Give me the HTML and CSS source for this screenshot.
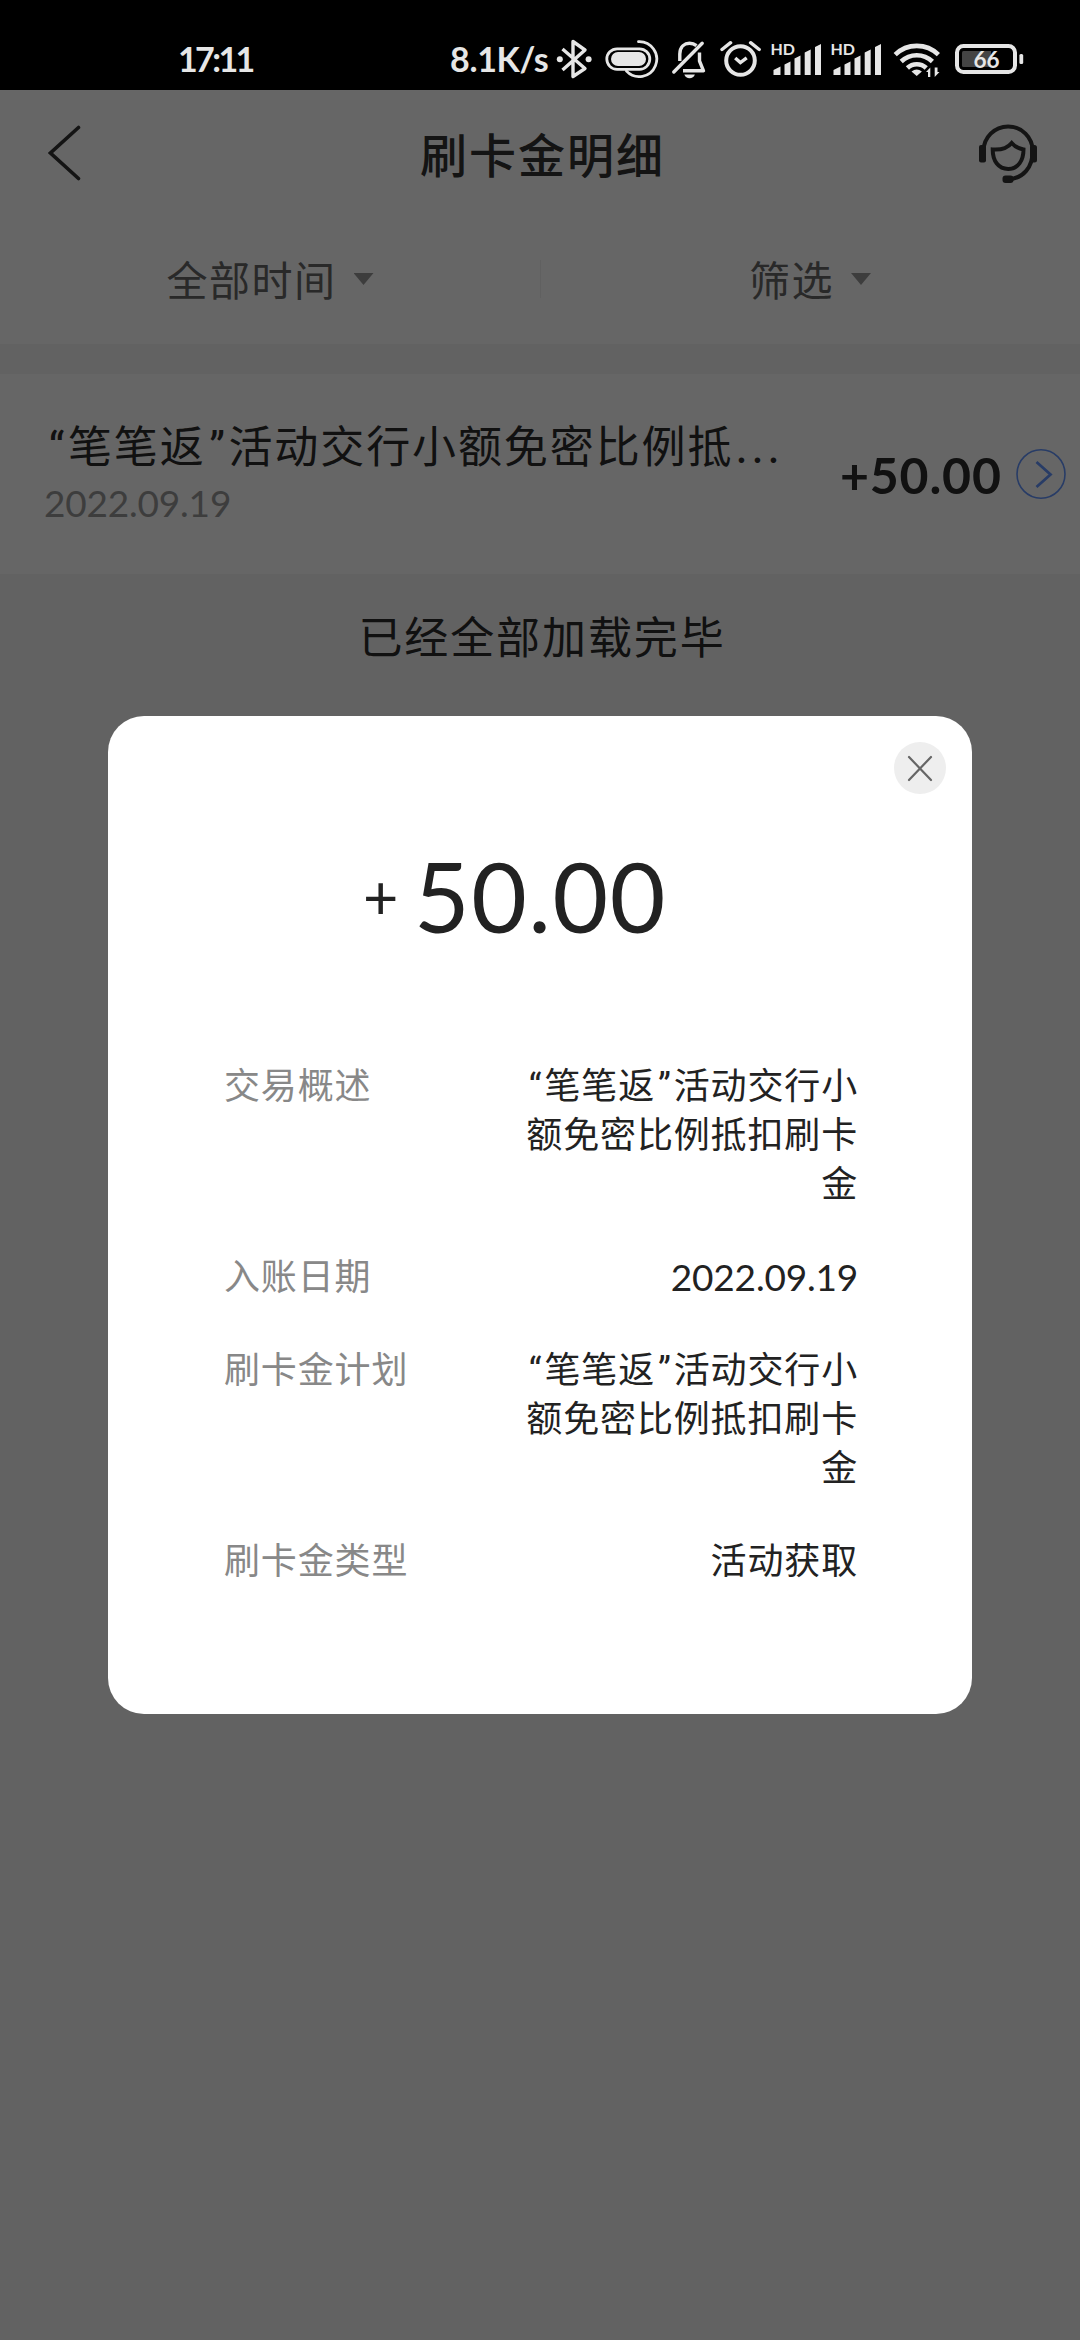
FILE: index.html
```html
<!DOCTYPE html>
<html lang="zh-CN">
<head>
<meta charset="utf-8">
<title>刷卡金明细</title>
<link rel="stylesheet" href="styles.css">
</head>
<body>
<div class="screen">
  <header class="status">
    <span class="clock">17:11</span>
    <span class="speed">8.1K/s</span>
    <svg class="ic-bt" width="36" height="42" viewBox="556 38 36 42"><path d="M562.5 49 585 68.5 573 76.5V41.5L585 50 562.5 70" fill="none" stroke="#e6e6e6" stroke-width="3.4" stroke-linejoin="round"/><circle cx="559.8" cy="59.3" r="3" fill="#e6e6e6"/><circle cx="588.6" cy="59.3" r="3" fill="#e6e6e6"/></svg>
    <svg class="ic-pill" width="56" height="42" viewBox="604 38 56 42"><rect x="606.8" y="48.8" width="43" height="20.6" rx="10.3" fill="none" stroke="#e6e6e6" stroke-width="2.8"/><rect x="611" y="52" width="35" height="14" rx="7" fill="#e6e6e6"/><path d="M638.5 41.6a17.5 17.5 0 1 1-12 29.5" fill="none" stroke="#e6e6e6" stroke-width="2.8" stroke-linecap="round"/></svg>
    <svg class="ic-bell" width="36" height="42" viewBox="671 38 36 42"><g fill="none" stroke="#e6e6e6"><path d="M679.8 61V54C680 46 685 43.3 689.5 43.3c3 0 5 .8 7 2.4M699.5 52.5v8.5l4 9.8H683" stroke-width="3.4" stroke-linejoin="round"/><path d="M673.8 72 702.2 43.2" stroke-width="3.4" stroke-linecap="round"/></g><path d="M684.3 74.5h10.6q-1.5 3.8-5.3 3.8t-5.3-3.8z" fill="#e6e6e6"/></svg>
    <svg class="ic-alarm" width="42" height="42" viewBox="720 38 42 42"><g fill="none" stroke="#e6e6e6"><circle cx="740.5" cy="60.5" r="14.3" stroke-width="4"/><path d="m735.2 58 5.2 4.6 6.3-4.8" stroke-width="3.4"/><path d="m722 49.5 8.6-6.8M759.2 49.5l-8.6-6.8" stroke-width="3.4" stroke-linecap="round"/></g></svg>
    <svg class="ic-sig1" width="54" height="42" viewBox="770 38 54 42"><text class="hd" x="770.5" y="55">HD</text><path d="M773.5 75v-5l7-3.5V75zM784.5 75V64.500l6-3V75zM794.500 75V58.500l6-3V75zM804.700 75V52.500l6-3V75zM815 75V47l6-3V75z" fill="#e6e6e6"/></svg>
    <svg class="ic-sig2" width="54" height="42" viewBox="770 38 54 42"><text class="hd" x="770.5" y="55">HD</text><path d="M773.5 75v-5l7-3.5V75zM784.5 75V64.500l6-3V75zM794.500 75V58.500l6-3V75zM804.700 75V52.500l6-3V75zM815 75V47l6-3V75z" fill="#e6e6e6"/></svg>
    <svg class="ic-wifi" width="50" height="42" viewBox="892 38 50 42"><g fill="none" stroke="#e6e6e6" stroke-width="4.6"><path d="M895.200 54.600a31 31 0 0 1 43.200 0"/><path d="M901.200 61.500a22.500 22.500 0 0 1 31.200 0"/><path d="M907.400 68a13.500 13.500 0 0 1 18.800 0"/></g><path d="M911.500 71.500q5.200-4 10.400 0l-5.200 4.500z" fill="#e6e6e6"/><path d="m926 72 4.300-4.500V77H928v-5zM939.500 72h-2v-4.500h-2.800V77z" fill="#e6e6e6"/></svg>
    <svg class="ic-bat" width="72" height="42" viewBox="953 38 72 42"><rect x="957" y="46" width="58" height="26" rx="6.500" fill="none" stroke="#e6e6e6" stroke-width="4"/><path d="M963.500 51H991v16h-27.500q-1.500 0-1.500-1.500v-13q0-1.500 1.500-1.500z" fill="#444"/><rect x="1019.400" y="54" width="3.800" height="10" rx="1.500" fill="#e6e6e6"/><text class="pct" x="986.500" y="67.500" text-anchor="middle">66</text></svg>
  </header>

  <main class="page">
    <nav class="titlebar">
      <svg width="34" height="58" viewBox="48 124 34 58"><path d="M78.500 127.500 50.500 153l28 25.500" fill="none" stroke="#333" stroke-width="3.600" stroke-linecap="round"/></svg>
      <h1>刷卡金明细</h1>
      <svg width="60" height="60" viewBox="978 122 60 60"><g fill="none" stroke="#333" stroke-width="4"><path d="M983.500 150a24.600 24.600 0 1 1 49.200 0c0 16-9 27.500-25 28.500"/><path d="M992.700 148.500c8 .6 14.500-1 19-6.500 3 3.500 6.500 5.500 11.800 6.500 0 11-5.500 19.500-15.300 19.500s-15.500-8-15.500-19.500z"/></g><rect x="979" y="144" width="7" height="17.500" rx="2" fill="#333"/><rect x="1030" y="144" width="7" height="17.500" rx="2.500" fill="#333"/><rect x="1002.500" y="174.500" width="11" height="7.500" rx="3" fill="#333"/></svg>
    </nav>
    <div class="filters">
      <div class="filter"><span>全部时间</span><i></i></div>
      <div class="filter"><span>筛选</span><i></i></div>
    </div>
    <section class="record">
      <div class="record-text">
        <div class="record-title"><span class="q">“</span>笔笔返<span class="q">”</span>活动交行小额免密比例抵<span class="dots">...</span></div>
        <div class="record-date">2022.09.19</div>
      </div>
      <div class="record-amount">+50.00</div>
      <svg width="52" height="52" viewBox="0 0 52 52"><ellipse cx="26" cy="26" rx="24" ry="24.200" fill="none" stroke="#6496ff" stroke-width="1.600"/><path d="m21.500 14 14 12.500-14 12.500" fill="none" stroke="#6496ff" stroke-width="2.800"/></svg>
    </section>
    <p class="end">已经全部加载完毕</p>
  </main>

  <div class="mask"></div>
  <section class="dialog">
    <svg class="close" width="52" height="52" viewBox="0 0 52 52"><circle cx="26" cy="26" r="26" fill="#eee"/><path d="m15 15 22 23M37 15 15 38" stroke="#666" stroke-width="2.200" stroke-linecap="round"/></svg>
    <div class="amount"><span class="plus">+</span><span class="sum">50.00</span></div>
    <dl class="details">
      <div><dt>交易概述</dt><dd><span class="q">“</span>笔笔返<span class="q">”</span>活动交行小<br>额免密比例抵扣刷卡<br>金</dd></div>
      <div><dt>入账日期</dt><dd class="num">2022.09.19</dd></div>
      <div><dt>刷卡金计划</dt><dd><span class="q">“</span>笔笔返<span class="q">”</span>活动交行小<br>额免密比例抵扣刷卡<br>金</dd></div>
      <div><dt>刷卡金类型</dt><dd>活动获取</dd></div>
    </dl>
  </section>
</div>
</body>
</html>
```
FILE: styles.css
```css
* { box-sizing: border-box; margin: 0; padding: 0; }
body { width: 1080px; height: 2340px; font-family: Lato, "Noto Sans CJK SC", sans-serif; }
svg { display: block; flex: none; }
.screen { position: relative; width: 1080px; height: 2340px; overflow: hidden; display: flex; flex-direction: column; background: #f6f6f6; }

.status { height: 90px; flex: none; background: #000; color: #e6e6e6; display: flex; align-items: flex-start; padding: 38px 0 0 178px; font-size: 34px; line-height: 42px; font-weight: 700; }
.clock { width: 272px; letter-spacing: -2.600px; }
.speed { width: 106px; letter-spacing: -.3px; white-space: nowrap; }
.ic-pill { margin-left: 12px; }
.ic-bell { margin-left: 11px; }
.ic-alarm { margin-left: 13px; }
.ic-sig1 { margin-left: 8px; }
.ic-sig2 { margin-left: 6px; }
.ic-wifi { margin-left: 8px; }
.ic-bat { margin-left: 11px; }
.hd { font: 700 16px Lato, sans-serif; fill: #e6e6e6; }
.pct { font: 700 22.500px Lato, sans-serif; fill: #e6e6e6; }

.page { flex: 1; }
.titlebar { height: 130px; background: #fff; display: flex; align-items: center; justify-content: space-between; padding: 0 42px 4px 48px; }
.titlebar h1 { font-size: 47px; font-weight: 500; line-height: 60px; letter-spacing: 2px; color: #333; margin-left: 25px; padding-top: 3px; }
.filters { height: 124px; background: #fff; display: flex; align-items: center; }
.filter { flex: 1; height: 124px; display: flex; align-items: center; justify-content: center; gap: 17px; font-size: 41px; letter-spacing: 1.500px; color: #666; }
.filter span { line-height: 60px; margin-top: -2px; }
.filter + .filter { background: linear-gradient(#f0f0f0, #f0f0f0) 0 40px / 1px 38px no-repeat; }
.filter i { width: 20px; height: 12px; margin-top: -6px; background: #999; clip-path: polygon(0 0, 100% 0, 50% 100%); }

.record { margin-top: 30px; height: 200px; background: #fff; display: flex; padding-left: 45px; }
.record-text { width: 795px; padding-top: 42px; white-space: nowrap; }
.record-title { font-size: 44px; letter-spacing: 1.900px; line-height: 60px; color: #2b2b2b; }
.q { display: inline-block; width: .52em; letter-spacing: 0; text-align: center; font-family: Roboto, sans-serif; line-height: 1; }
.dots { letter-spacing: 5.500px; margin-left: 3px; }
.record-date { font-size: 37px; line-height: 50px; color: #999; margin: 2px 0 0 -1px; letter-spacing: -.2px; }
.record-amount { width: 176px; padding-top: 71px; font-size: 50px; line-height: 60px; font-weight: 700; letter-spacing: .8px; color: #2b2b2b; }
.record svg { margin-top: 74px; margin-left: -1px; }
.end { text-align: center; font-size: 44px; letter-spacing: 1.900px; line-height: 60px; padding: 33px 0 0 4px; color: #2b2b2b; }

.mask { position: absolute; inset: 90px 0 0; background: rgba(0, 0, 0, .6); }
.dialog { position: absolute; left: 108px; top: 716px; width: 864px; height: 998px; border-radius: 36px; background: #fff; padding: 26px; }
.close { margin-left: auto; }
.amount { display: flex; align-items: center; padding-left: 229px; margin-top: 42px; height: 120px; color: #222; }
.plus { font-size: 61px; width: 51px; line-height: 120px; }
.sum { font-size: 96px; line-height: 120px; letter-spacing: 1.500px; }
.details { margin: 105px 88px 0 90px; display: flex; flex-direction: column; gap: 44px; font-size: 36px; line-height: 49px; letter-spacing: .850px; }
.details div { display: flex; justify-content: space-between; }
.details dt { color: #888; }
.details dd { color: #222; text-align: right; white-space: nowrap; }
.details .num { font-size: 37px; letter-spacing: -.2px; }
```
